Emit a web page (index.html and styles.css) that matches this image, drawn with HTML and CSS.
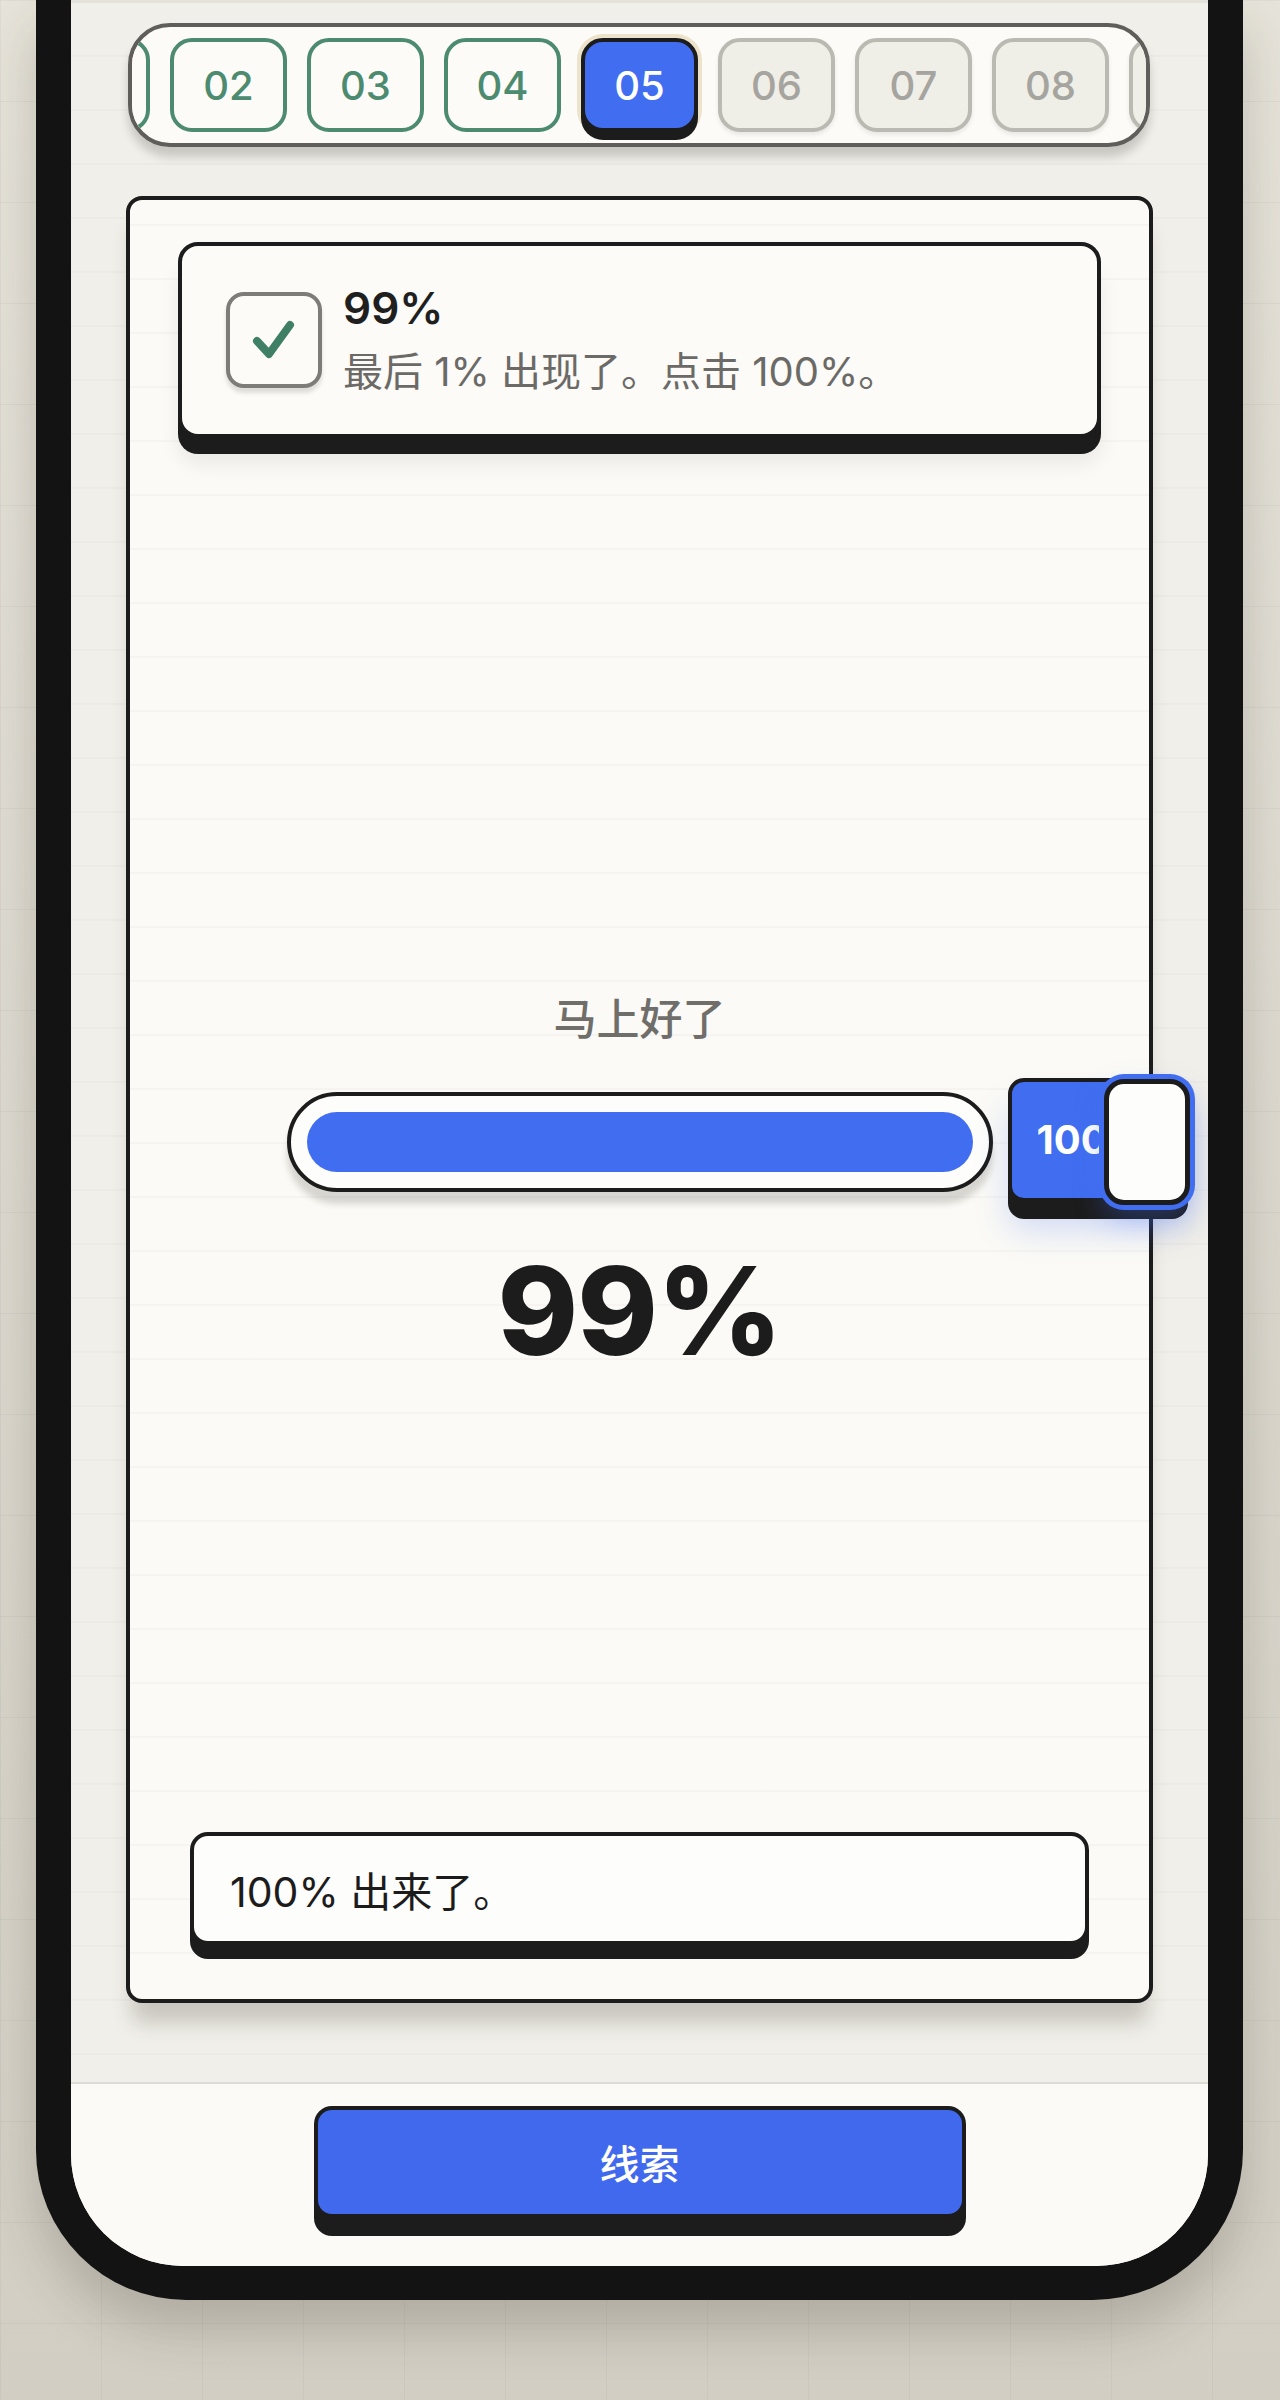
FILE: index.html
```html
<!DOCTYPE html>
<html lang="zh-CN">

<head>
    <meta charset="UTF-8">
    <meta name="viewport" content="width=device-width, initial-scale=1.0">
    <title>99%</title>
    <link rel="stylesheet" href="styles.css">
</head>

<body>

    <div class="phone">
        <div class="screen">

            <nav class="steps">
                <div class="steps-track">
                    <span class="step done" aria-label="01"></span>
                    <span class="step done">02</span>
                    <span class="step done">03</span>
                    <span class="step done">04</span>
                    <span class="step current">05</span>
                    <span class="step">06</span>
                    <span class="step">07</span>
                    <span class="step">08</span>
                    <span class="step" aria-label="09"></span>
                </div>
            </nav>

            <main class="card">
                <div class="task">
                    <div class="task-check">
                        <svg viewBox="0 0 88 88" width="88" height="88">
                            <path d="M27 45 L39 58 L60 29" fill="none" stroke="#3f8064" stroke-width="8"
                                stroke-linecap="round" stroke-linejoin="round" />
                        </svg>
                    </div>
                    <div class="task-text">
                        <div class="task-title">99%</div>
                        <div class="task-desc">最后 1% 出现了。点击 100%。</div>
                    </div>
                </div>

                <div class="stage">
                    <div class="stage-label">马上好了</div>
                    <div class="meter">
                        <div class="meter-fill" style="width: 100%"></div>
                        <button class="jump">100%</button>
                        <span class="knob"></span>
                    </div>
                    <div class="stage-value">99%</div>
                </div>

                <div class="note">100% 出来了。</div>
            </main>

            <footer class="dock">
                <button class="hint">线索</button>
            </footer>

        </div>
    </div>

</body>

</html>
```

FILE: styles.css
```css
body {
    margin: 0;
    height: 2400px;
    font-family: "Inter", "Noto Sans CJK SC", sans-serif;
    background-color: #dcd8ce;
    background-image:
        linear-gradient(to right, rgba(0, 0, 0, 0.035) 1px, transparent 1px),
        linear-gradient(to bottom, rgba(0, 0, 0, 0.035) 1px, transparent 1px),
        linear-gradient(to bottom, #e6e3da, #d2cec4);
    background-size: 101px 101px, 101px 101px, 100% 100%;
    overflow: hidden;
}

/* phone body */
.phone {
    width: 1207px;
    height: 2300px;
    margin-left: 36px;
    box-sizing: border-box;
    border: 35px solid #131313;
    border-top: 0;
    border-bottom-width: 34px;
    border-radius: 0 0 150px 150px;
    background: #131313;
    box-shadow: 0 30px 50px rgba(60, 50, 35, 0.22), inset 0 0 0 2px #262626;
}

.screen {
    height: 2266px;
    display: flex;
    flex-direction: column;
    border-top: 3px solid #e4e2db;
    box-sizing: border-box;
    border-radius: 0 0 112px 112px;
    overflow: hidden;
    background-color: #f1efe9;
    background-image: repeating-linear-gradient(to bottom, transparent 0 52px, rgba(0, 0, 0, 0.018) 52px 54px);
}

/* level strip */
.steps {
    margin: 20px 58px 0 57px;
    height: 124px;
    box-sizing: border-box;
    border: 4px solid #5f5e5a;
    border-radius: 42px;
    background: #fcfbf7;
    overflow: hidden;
    padding: 11px 0;
    box-shadow: 0 10px 10px rgba(0, 0, 0, 0.17);
    flex-shrink: 0;
}

.steps-track {
    display: flex;
    gap: 20px;
    margin-left: -99px;
}

.step {
    flex-shrink: 0;
    width: 117px;
    height: 94px;
    box-sizing: border-box;
    display: flex;
    align-items: center;
    justify-content: center;
    border: 4px solid #bab9b2;
    border-radius: 22px;
    background: #efeee7;
    color: #a5a49e;
    font-size: 40px;
    font-weight: 500;
    box-shadow: 0 3px 4px rgba(0, 0, 0, 0.08);
}

.step.done {
    border-color: #4d8b70;
    background: #fcfbf7;
    color: #4d8b70;
    box-shadow: none;
}

.step.current {
    border-color: #1c1c1c;
    background: #416ef0;
    color: #fff;
    box-shadow: 0 8px 0 #1c1c1c, 0 0 0 4px #ece3ca;
}

/* main card */
.card {
    margin: 49px 55px 0;
    height: 1807px;
    box-sizing: border-box;
    border: 4px solid #1c1c1c;
    border-radius: 16px;
    background-color: #fbfaf6;
    background-image: repeating-linear-gradient(to bottom, transparent 0 24px, rgba(0, 0, 0, 0.022) 24px 26px, transparent 26px 54px);
    padding: 42px 48px 54px;
    display: flex;
    flex-direction: column;
    box-shadow: 0 26px 20px -6px rgba(60, 55, 45, 0.22);
    flex-shrink: 0;
}

.task {
    height: 196px;
    box-sizing: border-box;
    border: 4px solid #1c1c1c;
    border-radius: 20px;
    background: #fcfbf8;
    padding: 0 44px;
    display: flex;
    align-items: center;
    gap: 21px;
    box-shadow: 0 16px 0 #1c1c1c, 0 26px 20px rgba(0, 0, 0, 0.07);
    flex-shrink: 0;
}

.task-check {
    width: 96px;
    height: 96px;
    box-sizing: border-box;
    border: 4px solid #7d7c78;
    border-radius: 18px;
    background: #fcfbf8;
    box-shadow: 0 5px 4px rgba(0, 0, 0, 0.12);
    flex-shrink: 0;
}

.task-check svg {
    display: block;
}

.task-title {
    font-size: 44px;
    font-weight: 600;
    color: #1f1f1f;
    line-height: 1.2;
}

.task-desc {
    margin-top: 12px;
    font-size: 40px;
    color: #6b6a66;
    line-height: 1.3;
}

/* progress area */
.stage {
    flex: 1;
    display: flex;
    flex-direction: column;
    align-items: center;
    justify-content: center;
    padding-top: 100px;
}

.stage-label {
    font-size: 43px;
    font-weight: 500;
    color: #6f6e6a;
    line-height: 1.3;
}

.meter {
    position: relative;
    margin-top: 44px;
    width: 706px;
    height: 100px;
    box-sizing: border-box;
    border: 4px solid #1c1c1c;
    border-radius: 50px;
    background: #fdfdfb;
    padding: 16px;
    box-shadow: 0 12px 6px rgba(40, 35, 25, 0.17);
}

.meter-fill {
    height: 100%;
    border-radius: 30px;
    background: #416ef0;
}

.jump {
    position: absolute;
    left: calc(100% + 19px);
    top: -18px;
    width: 180px;
    height: 124px;
    box-sizing: border-box;
    border: 4px solid #1c1c1c;
    border-radius: 16px;
    background: #416ef0;
    color: #fff;
    font-family: inherit;
    font-size: 40px;
    font-weight: 700;
    text-align: left;
    white-space: nowrap;
    overflow: hidden;
    padding: 0 0 0 25px;
    box-shadow: 0 17px 0 #1c1c1c, 0 28px 34px rgba(65, 110, 240, 0.22);
}

.knob {
    position: absolute;
    left: calc(100% + 115px);
    top: -17px;
    width: 86px;
    height: 126px;
    box-sizing: border-box;
    border: 5px solid #1c1c1c;
    border-radius: 20px;
    background: #fdfdfb;
    box-shadow: 0 0 0 5px #416ef0, 0 14px 30px rgba(65, 110, 240, 0.35);
}

.stage-value {
    margin-top: 52px;
    font-size: 122px;
    font-weight: 800;
    color: #1c1c1c;
    line-height: 1.1;
    letter-spacing: -1px;
}

.note {
    margin: 0 12px;
    height: 113px;
    box-sizing: border-box;
    border: 4px solid #1c1c1c;
    border-radius: 18px;
    background: #fdfdfb;
    padding: 0 36px;
    display: flex;
    align-items: center;
    font-size: 41px;
    color: #1c1c1c;
    box-shadow: 0 14px 0 #1c1c1c;
    flex-shrink: 0;
}

/* bottom bar */
.dock {
    margin-top: 79px;
    flex: 1;
    border-top: 2px solid #dddbd4;
    background: #fbfaf6;
    display: flex;
    justify-content: center;
    padding-top: 22px;
}

.hint {
    width: 652px;
    height: 112px;
    box-sizing: border-box;
    border: 4px solid #1c1c1c;
    border-radius: 18px;
    background: #4169ee;
    color: #fff;
    font-family: inherit;
    font-size: 40px;
    font-weight: 500;
    box-shadow: 0 18px 0 #1c1c1c;
}
```
